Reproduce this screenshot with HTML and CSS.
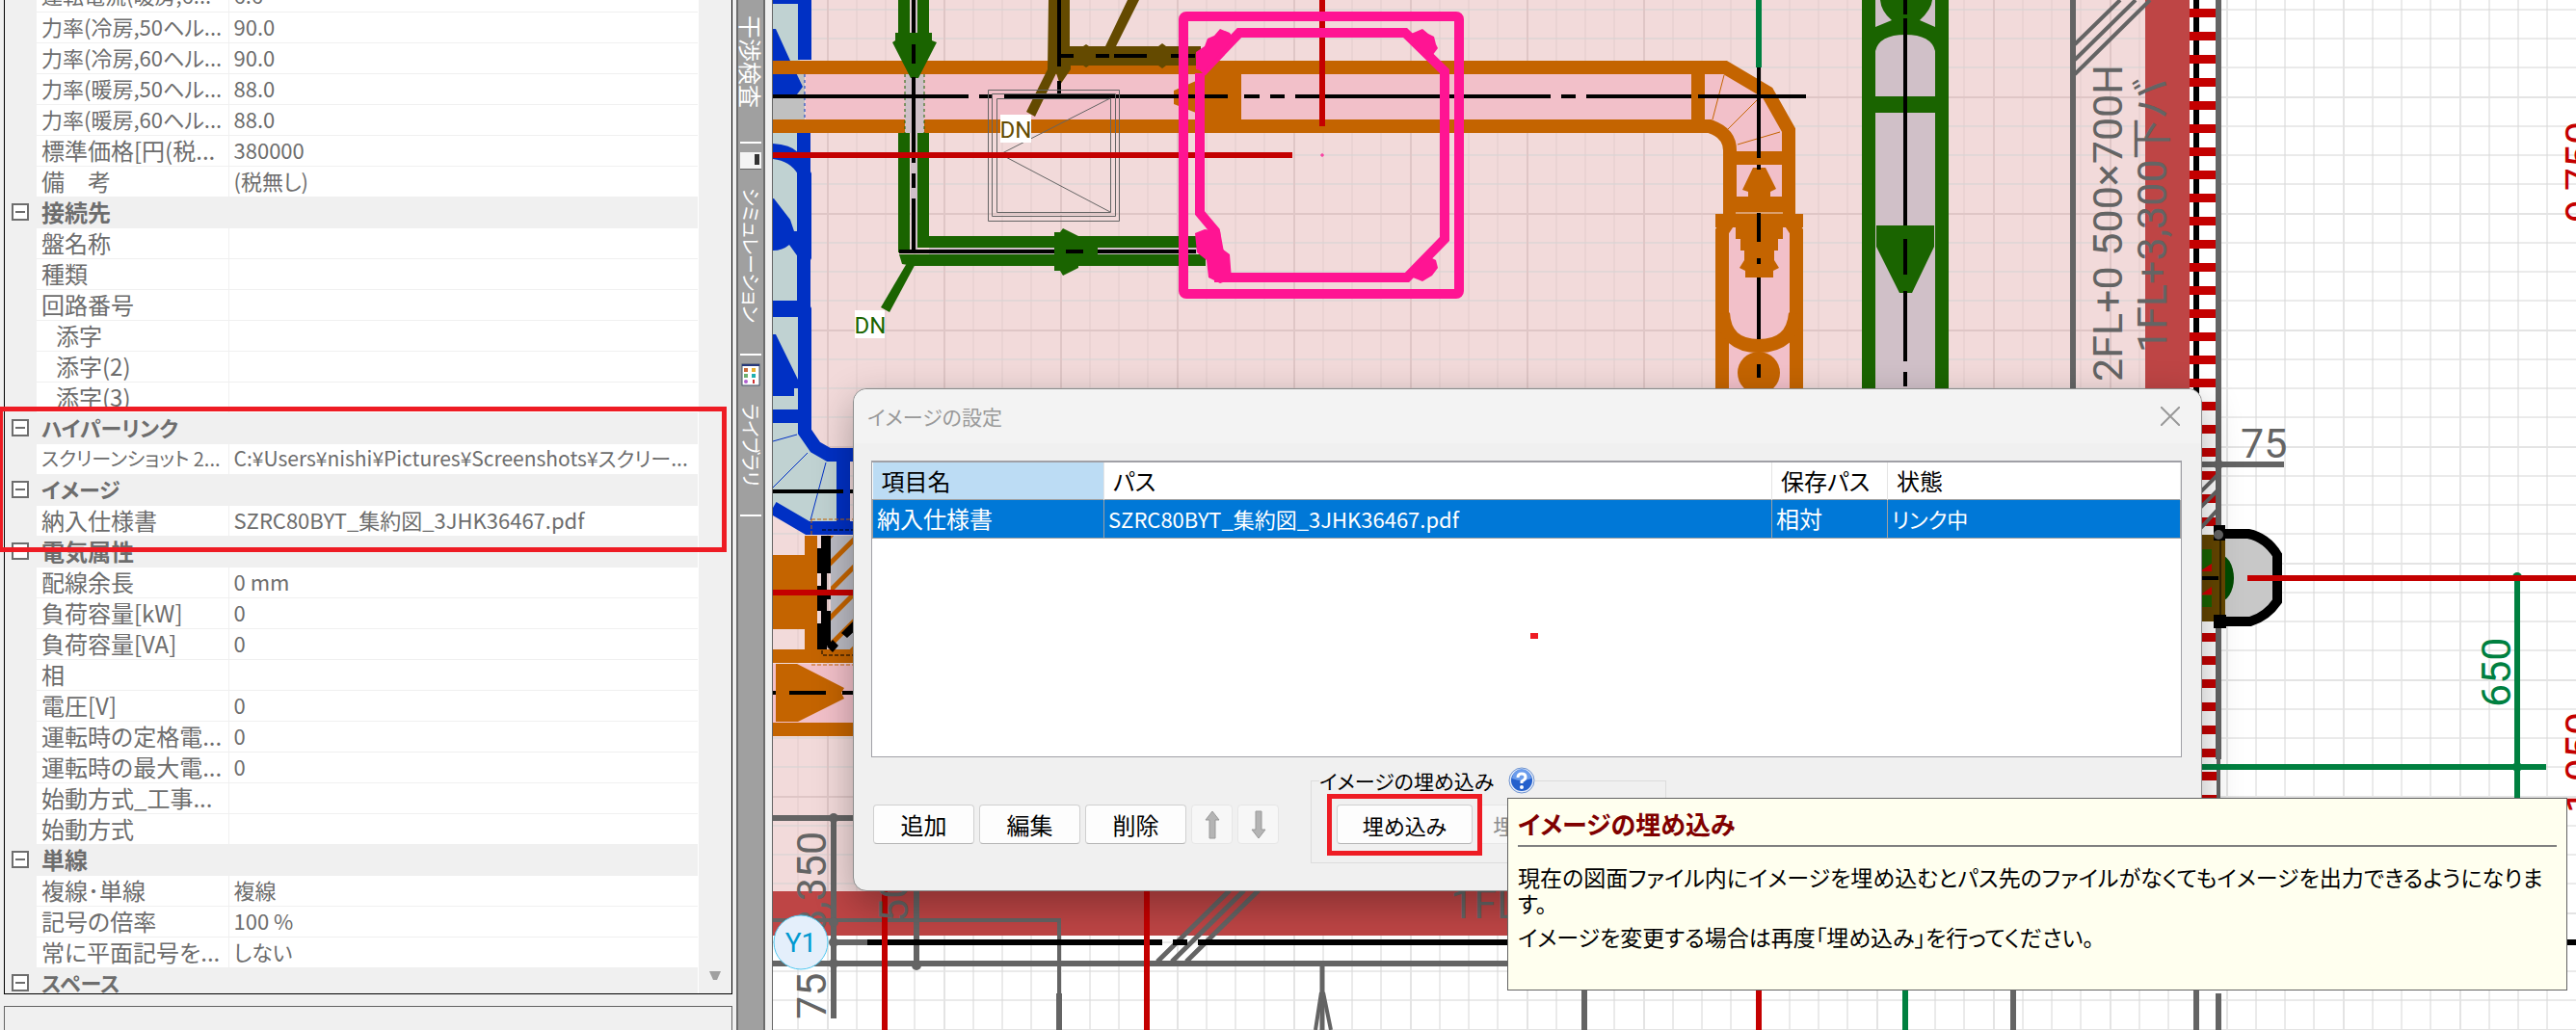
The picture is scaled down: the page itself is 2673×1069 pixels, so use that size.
FILE: index.html
```html
<!DOCTYPE html>
<html lang="ja">
<head>
  <meta charset="UTF-8" />
  <title>イメージの設定</title>
  <link rel="stylesheet" href="styles.css">
</head>
<body>

  <aside id="property-panel">
    <div class="tree-box">
      <div class="tree-scroll">
        <table class="props">
          <colgroup><col class="col-toggle"><col class="col-name"><col></colgroup>
          <tbody>
            <tr><td></td><th class="mixed">運転電流(暖房,6...</th><td>6.6</td></tr>
            <tr><td></td><th class="mixed">力率(冷房,50ヘル...</th><td>90.0</td></tr>
            <tr><td></td><th class="mixed">力率(冷房,60ヘル...</th><td>90.0</td></tr>
            <tr><td></td><th class="mixed">力率(暖房,50ヘル...</th><td>88.0</td></tr>
            <tr><td></td><th class="mixed">力率(暖房,60ヘル...</th><td>88.0</td></tr>
            <tr><td></td><th>標準価格[円(税...</th><td>380000</td></tr>
            <tr><td></td><th>備　考</th><td>(税無し)</td></tr>
            <tr class="group"><td><button class="toggle" aria-label="接続先"></button></td><th colspan="2">接続先</th></tr>
            <tr><td></td><th>盤名称</th><td></td></tr>
            <tr><td></td><th>種類</th><td></td></tr>
            <tr><td></td><th>回路番号</th><td></td></tr>
            <tr><td></td><th class="sub">添字</th><td></td></tr>
            <tr><td></td><th class="sub">添字(2)</th><td></td></tr>
            <tr><td></td><th class="sub">添字(3)</th><td></td></tr>
            <tr class="group"><td><button class="toggle" aria-label="ハイパーリンク"></button></td><th colspan="2" class="mixed">ハイパーリンク</th></tr>
            <tr><td></td><th class="kana">スクリーンショット 2...</th><td class="path">C:¥Users¥nishi¥Pictures¥Screenshots¥スクリー...</td></tr>
            <tr class="group"><td><button class="toggle" aria-label="イメージ"></button></td><th colspan="2" class="mixed">イメージ</th></tr>
            <tr><td></td><th>納入仕様書</th><td>SZRC80BYT_集約図_3JHK36467.pdf</td></tr>
            <tr class="group"><td><button class="toggle" aria-label="電気属性"></button></td><th colspan="2">電気属性</th></tr>
            <tr><td></td><th>配線余長</th><td>0 mm</td></tr>
            <tr><td></td><th>負荷容量[kW]</th><td>0</td></tr>
            <tr><td></td><th>負荷容量[VA]</th><td>0</td></tr>
            <tr><td></td><th>相</th><td></td></tr>
            <tr><td></td><th>電圧[V]</th><td>0</td></tr>
            <tr><td></td><th>運転時の定格電...</th><td>0</td></tr>
            <tr><td></td><th>運転時の最大電...</th><td>0</td></tr>
            <tr><td></td><th>始動方式_工事...</th><td></td></tr>
            <tr><td></td><th>始動方式</th><td></td></tr>
            <tr class="group"><td><button class="toggle" aria-label="単線"></button></td><th colspan="2">単線</th></tr>
            <tr><td></td><th>複線･単線</th><td>複線</td></tr>
            <tr><td></td><th>記号の倍率</th><td>100 %</td></tr>
            <tr><td></td><th>常に平面記号を...</th><td>しない</td></tr>
            <tr class="group"><td><button class="toggle" aria-label="スペース"></button></td><th colspan="2" class="mixed">スペース</th></tr>
          </tbody>
        </table>
      </div>
      <div class="scrollbar">
        <svg width="12" height="10" viewBox="0 0 12 10"><path d="M0 0H12L8 9H4Z" fill="#a0a0a0"/></svg>
      </div>
    </div>
    <div class="info-box"></div>
    <div class="mark mark-panel"></div>
  </aside>

  <nav id="side-tabs">
    <a href="#" class="tab">干渉検査</a>
    <span class="sep"></span>
    <svg class="tab-icon" width="24" height="20" viewBox="0 0 24 20">
      <rect x="1" y="1" width="22" height="17" fill="#f4f4f4"/><path d="M1 18.500H23" stroke="#666"/>
      <rect x="16" y="3" width="5" height="11" fill="#333"/>
    </svg>
    <a href="#" class="tab tab-sim">シミュレーション</a>
    <span class="sep"></span>
    <svg class="tab-icon" width="24" height="24" viewBox="0 0 24 24">
      <rect x="3" y="1" width="18" height="22" fill="#fff" stroke="#456" />
      <rect x="3" y="1" width="18" height="2" fill="#26387a"/>
      <rect x="5" y="5" width="4" height="4" fill="#c86a3a"/><rect x="13" y="5" width="4" height="4" fill="#e8b030"/>
      <rect x="5" y="11" width="4" height="4" fill="#6cb070"/><rect x="13" y="11" width="4" height="4" fill="#20b0b0"/>
      <circle cx="7" cy="19" r="2" fill="#b060d0"/><rect x="14" y="17" width="2" height="4" fill="#d03030"/>
    </svg>
    <a href="#" class="tab tab-lib">ライブラリ</a>
    <span class="sep"></span>
  </nav>

  <main id="canvas">
    <svg class="drawing" viewBox="802 0 1871 1069" preserveAspectRatio="xMinYMin slice">
      <defs>
        <pattern id="grid" width="121" height="121" x="11" y="100" patternUnits="userSpaceOnUse">
          <path d="M31 0V121M61 0V121M91 0V121M0 31H121M0 61H121M0 91H121" stroke="#d6d6d6"/>
          <path d="M1 0V121M0 1H121" stroke="#e4e4e4" stroke-width="2"/>
        </pattern>
        <pattern id="grid-pink" width="121" height="121" x="11" y="100" patternUnits="userSpaceOnUse">
          <path d="M31 0V121M61 0V121M91 0V121" stroke="#e2cccc"/>
          <path d="M0 31H121M0 61H121M0 91H121" stroke="#d3d3d3"/>
          <path d="M1 0V121M0 1H121" stroke="#dfc6c6" stroke-width="2"/>
        </pattern>
        <pattern id="hatch" width="20" height="20" patternUnits="userSpaceOnUse" patternTransform="rotate(45)">
          <rect width="20" height="20" fill="#bcbcc4"/><rect width="5" height="20" fill="#c46400"/>
        </pattern>
      </defs>

      <!-- floor and walls -->
      <rect x="802" width="1871" height="1069" fill="#fff"/>
      <rect x="802" width="1871" height="1069" fill="url(#grid)"/>
      <rect x="802" width="1424" height="925" fill="#f2dada"/>
      <rect x="802" width="1424" height="925" fill="url(#grid-pink)"/>
      <path d="M2226 0H2272V971H802V925H2226Z" fill="#be4545"/>
      <rect x="2272" width="27" height="925" fill="#fff"/>
      <path d="M2279 0V420" stroke="#000" stroke-width="6"/>
      <path d="M2287 9V850" stroke="#c40000" stroke-width="30" stroke-dasharray="9 15"/>
      <path d="M2302 0V788M2151 0V404" stroke="#646464" stroke-width="6"/>
      <path d="M2302 788V850" stroke="#646464" stroke-width="4"/>
      <path d="M2153 46L2200 0M2153 62L2216 0M2153 77L2231 0M2280 514L2302 492M2280 530L2302 508M2280 552L2302 528" stroke="#646464" stroke-width="4"/>

      <!-- blue duct -->
      <g fill="#c0d2d2">
        <rect x="802" width="28" height="63"/>
        <rect x="802" y="138" width="28" height="300"/>
        <path d="M802 438H834L846 464L858 476H874V547H838L802 527Z"/>
      </g>
      <rect x="802" y="77" width="33" height="47" fill="#c0c0c0"/>
      <g fill="#0030c4">
        <path d="M802 0H842V62H828V4H802Z"/>
        <path d="M802 30H805L820 63L833 90L827 98H802Z"/>
        <path d="M827 138H841V178L842 180V268L841 270V318L842 320V448H828V439H802V425H828V329H802V312H827Z"/>
        <path d="M802 149Q820 150 828 158V181Q820 167 802 165Z"/>
        <path d="M802 206H803L820 228L824 240H829V268L819 254Q812 260 802 260Z"/>
        <path d="M802 347H805L829 396V403H824V411H802Z"/>
      </g>
      <path d="M835 430V448L846 464L860 472H890M802 527L838 548H890M875 478V545" fill="none" stroke="#0030c4" stroke-width="14"/>
      <path d="M802 458L827 451M802 506L838 470M857 480L841 540" stroke="#0030c4"/>
      <path d="M802 510H875M882 510H890" stroke="#000" stroke-width="4"/>

      <!-- equipment on the left edge -->
      <rect x="862" y="556" width="28" height="118" fill="url(#hatch)"/>
      <path d="M802 576H835V556H848V674H890V688H802V674H835V653H802Z" fill="#c46400"/>
      <rect x="802" y="689" width="88" height="61" fill="#f2c0c9"/>
      <path d="M805 689H827L876 714L873 719L876 725L828 749H805ZM802 750H890V764H802Z" fill="#c46400"/>
      <path d="M802 719H805M819 719H857M874 719H890" stroke="#000" stroke-width="4"/>
      <path d="M848 569H852V556H862V595H858V612H862V622H858V634H862V670H858V674H848V647H852V634H848V608H852V595H848Z" fill="#000"/>
      <path d="M858 671L864 664L870 670L864 677ZM873 657L890 640V652L879 662Z" fill="#000"/>
      <path d="M842 539H890M842 539V556M842 690H890" stroke="#c46400" stroke-dasharray="4 2"/>
      <path d="M853 550H890M853 675V680H890" stroke="#000" fill="none" stroke-dasharray="4 2"/>

      <!-- orange pipe -->
      <path d="M836 77H1762V124H836Z" fill="#f2c0c9"/>
      <path d="M1762 70H1790L1834 96L1855 137V236H1864V404H1787V236H1795V150L1780 131H1762Z" fill="#f2c0c9"/>
      <path d="M835 77V124" stroke="#0030c4" stroke-dasharray="3 3"/>
      <path d="M802 63H1755V77H802ZM802 124H1755V138H802ZM1250 70H1288V130H1250Z" fill="#c46400"/>
      <path d="M1218 94L1241 84H1252V117H1241L1218 108Z" fill="#c46400"/>
      <g fill="none" stroke="#c46400" stroke-width="14">
        <path d="M1750 70H1790L1834 96L1856 135V228L1864 240V404"/>
        <path d="M1750 131H1774Q1795 138 1795 156V228L1787 240V404"/>
        <path d="M1762 64V136M1795 164H1856"/>
        <path d="M1788 325Q1790 359 1825 359Q1860 359 1863 325"/>
      </g>
      <g fill="#c46400">
        <path d="M1788 204H1863V222H1871V236H1780V222H1788Z"/>
        <path d="M1819 174H1832L1843 196L1837 199V204H1814V199L1808 197Z"/>
        <path d="M1801 236H1850V248H1845V260H1841V270L1846 278L1840 281V288H1811V281L1805 278L1810 270V260H1806V248H1801Z"/>
        <circle cx="1825" cy="387" r="22"/>
      </g>
      <path d="M1801 221H1850" stroke="#f2dada"/>
      <path d="M1789 78L1777 124M1825 102L1793 134M1803 150L1847 137" stroke="#c46400"/>

      <!-- green pipes -->
      <path d="M945 0H952V262H945ZM939 77H959V138H939ZM964 257H1242V264H964ZM1946 0H2008V404H1946Z" fill="#d0c0c8"/>
      <g fill="#1a6400">
        <path d="M932 0H944V40H932ZM952 0H964V40H952ZM932 138H944V262H932ZM952 138H964V245H1251V257H952ZM933 264H1251V276H948L936 274Z"/>
        <path d="M929 34H967V42L972 44L953 81H945L926 44L929 42Z"/>
        <path d="M1094 241H1100L1103 237L1119 245V257H1139V265H1119V278L1103 286L1100 281H1094Z"/>
        <path d="M944 268L952 270L923 324L914 319Z"/>
        <path d="M1932 0H1946V404H1932ZM2008 0H2022V404H2008ZM1946 100H2008V117H1946Z"/>
        <path d="M1946 53Q1950 36 1977 36Q2004 36 2008 53V28L1992 21Q2004 10 2005 0H1951Q1952 12 1963 21L1946 28Z"/>
        <path d="M1947 234H2007V256L1984 304H1971L1947 256Z"/>
      </g>
      <path d="M939 77V138M959 77V138" stroke="#1a6400" stroke-dasharray="3 3"/>
      <path d="M948 0V34M948 46V66M948 80V169M948 180V195M948 206V261M933 261H1094M1106 261H1124M1139 261H1241M1977 0V15M1977 19V234M1977 248V285M1977 302V375M1977 386V401" stroke="#000" stroke-width="4"/>

      <!-- brown drain -->
      <path d="M1088 0H1110V48H1124L1127 46L1130 48H1147L1170 0H1182L1158 48H1202L1206 45L1210 48H1246V68H1210L1206 71L1202 68H1130L1127 70L1124 68H1111V72L1100 88L1096 76L1074 121L1065 116L1087 72Z" fill="#644a00"/>
      <path d="M1099 0V69M1099 84V100M1101 58H1114M1137 58H1151M1156 58H1190M1215 58H1240" stroke="#000" stroke-width="4"/>
      <path d="M802 100H1005M1016 100H1030M1042 100H1274M1291 100H1307M1318 100H1333M1344 100H1609M1620 100H1635M1646 100H1755M1762 100H1874M1825 70V164M1825 171V176M1825 221V251M1825 268V274M1825 288V352M1825 378V392" stroke="#000" stroke-width="4"/>

      <!-- ceiling unit -->
      <path d="M1025.500 93.500H1161.500V229.500H1025.500ZM1029.500 97.500H1157.500V224.500H1029.500ZM1034.500 102.500H1152.500V220.500H1034.500ZM1152 102L1038 160L1152 220" fill="none" stroke="#646464"/>
      <path d="M802 161H1341M802 615H890M1372 0V131" stroke="#c40000" stroke-width="6"/>
      <path d="M1825 0V70" stroke="#008040" stroke-width="6"/>
      <path d="M1370 161H1374M1372 159V163" stroke="#ff1493"/>
      <g fill="none" stroke="#ff1493" stroke-width="10">
        <rect x="1228" y="17" width="286" height="288" rx="3"/>
        <path d="M1247 75L1286 34H1458L1499 74V248L1460 288H1265V262L1261 240L1245 221V76"/>
      </g>
      <g fill="#ff1493">
        <path d="M1241 72V54L1250 48L1253 40L1260 37L1266 30L1276 34L1280 40L1250 74Z"/>
        <path d="M1462 36L1476 30L1482 35L1488 38L1490 46L1492 50L1486 58L1478 56Z"/>
        <path d="M1462 282L1482 266L1490 270L1492 278L1486 286L1476 292L1466 288Z"/>
        <path d="M1240 242L1250 238L1266 240L1268 258L1276 264L1278 290L1266 294L1254 288L1252 270L1242 262Z"/>
      </g>
      <g fill="#fff"><rect x="1038" y="119" width="32" height="29"/><rect x="887" y="322" width="31" height="29"/></g>
      <text class="cad dn brown" x="1054" y="143" text-anchor="middle">DN</text>
      <text class="cad dn green" x="903" y="346" text-anchor="middle">DN</text>

      <!-- column fitting on the right wall -->
      <path d="M2302 554H2333Q2352 558 2363 576V624Q2352 640 2335 645H2302Z" fill="#c8c8c8"/>
      <ellipse cx="2302" cy="600" rx="16" ry="25" fill="#004b00"/>
      <rect x="2284" y="555" width="25" height="90" fill="#644600"/>
      <path d="M2284 570H2295V585L2284 592ZM2284 618H2295V630H2284Z" fill="#1a6400"/>
      <path d="M2284 592L2295 585V593H2284ZM2284 617L2295 609V617Z" fill="#d00000"/>
      <path d="M2302 554H2333Q2352 558 2363 576V624Q2352 640 2335 645H2302" fill="none" stroke="#000" stroke-width="10"/>
      <path d="M2297 545H2309V561H2297ZM2297 638H2310V652H2297Z"/>
      <path d="M2284 600H2302" stroke="#000" stroke-width="4"/>
      <path d="M2304 561V638" stroke="#000"/>
      <circle cx="2302" cy="555" r="5" fill="#646464"/>

      <!-- dimension lines -->
      <g stroke="#646464" stroke-width="6">
        <path d="M802 849H890M865 849V1057M951 900V1003M864 978H900M802 1000H2300M2280 482H2370"/>
        <path d="M1099 1031V1069M1644 1000V1069M2089 1000V1069M2279 1000V1069M2302 1031V1069"/>
        <path d="M802 955H1099V1040" fill="none" stroke-width="4"/>
        <path d="M1201 998L1276 924M1216 998L1291 924M1231 998L1306 924" stroke-width="5"/>
        <path d="M1372 1002V1069" stroke-width="5"/>
        <path d="M1371 1030L1365 1069M1373 1030L1381 1069" stroke-width="4"/>
      </g>
      <g fill="#646464"><circle cx="865" cy="849" r="5"/><circle cx="865" cy="957" r="5"/><circle cx="865" cy="978" r="5"/><circle cx="865" cy="1000" r="5"/><circle cx="951" cy="1002" r="5"/><circle cx="2302" cy="482" r="5"/></g>
      <path d="M900 978H1206M1217 978H1232M1243 978H2673" stroke="#000" stroke-width="6"/>
      <path d="M918 920V1069M1190 920V1069M1825 1020V1069" stroke="#c40000" stroke-width="6"/>
      <path d="M1977 1020V1069M2612 596V830M2280 796H2642" stroke="#008040" stroke-width="6"/>
      <g fill="#008040"><circle cx="2612" cy="599" r="5"/><circle cx="2612" cy="796" r="5"/></g>
      <path d="M2332 600H2673" stroke="#c40000" stroke-width="6"/>

      <text class="cad" transform="translate(857 968) rotate(-90)">8,350</text>
      <text class="cad" transform="translate(857 1058) rotate(-90)">75</text>
      <text class="cad" transform="translate(942 957) rotate(-90)">50</text>
      <text class="cad" x="1505" y="953">1FL</text>
      <text class="cad" transform="translate(2202 396) rotate(-90)">2FL+0 500×700H</text>
      <text class="cad" transform="translate(2248 366) rotate(-90)">1FL+3,300下バ</text>
      <text class="cad" x="2325" y="475">75</text>
      <text class="cad teal" transform="translate(2605 734) rotate(-90)">650</text>
      <text class="cad red" transform="translate(2692 231) rotate(-90)">9,750</text>
      <text class="cad red" transform="translate(2692 844) rotate(-90)">1,050</text>

      <circle cx="831" cy="978" r="28" fill="#e4effb" stroke="#4fc8f0"/>
      <text class="cad axis" x="831" y="988" text-anchor="middle">Y1</text>
    </svg>

    <section class="dialog">
      <header class="title-bar">
        <span>イメージの設定</span>
        <button class="close" aria-label="閉じる">
          <svg width="20" height="20" viewBox="0 0 20 20"><path d="M0 0L20 20M20 0L0 20" stroke="#999" stroke-width="2"/></svg>
        </button>
      </header>
      <div class="list-box">
        <table class="list">
          <colgroup><col class="c-name"><col><col class="c-save"><col class="c-state"></colgroup>
          <thead>
            <tr><th class="sorted">項目名</th><th>パス</th><th>保存パス</th><th>状態</th></tr>
          </thead>
          <tbody>
            <tr><td>納入仕様書</td><td class="mixed">SZRC80BYT_集約図_3JHK36467.pdf</td><td>相対</td><td class="mixed">リンク中</td></tr>
          </tbody>
        </table>
        <span class="red-dot"></span>
      </div>
      <footer class="actions">
        <button>追加</button>
        <button>編集</button>
        <button>削除</button>
        <button class="arrow" disabled aria-label="上へ">
          <svg width="16" height="30" viewBox="0 0 16 30"><path d="M8 1L15 10H11V29H5V10H1Z" fill="#b4b4b4" stroke="#999"/></svg>
        </button>
        <button class="arrow" disabled aria-label="下へ">
          <svg width="16" height="30" viewBox="0 0 16 30"><path d="M8 29L15 20H11V1H5V20H1Z" fill="#b4b4b4" stroke="#999"/></svg>
        </button>
        <fieldset>
          <legend>イメージの埋め込み
            <svg width="28" height="28" viewBox="0 0 28 28">
              <circle cx="14" cy="14" r="13" fill="#e6eefa" stroke="#6f93cf"/>
              <circle cx="14" cy="14" r="11" fill="#2460cc"/>
              <path d="M4 12A10 10 0 0 1 24 12Q14 16 4 12Z" fill="#6b9cec"/>
              <path d="M10 11Q10 7 14 7Q18 7 18 10.500Q18 13 14 15V17" fill="none" stroke="#fff" stroke-width="3"/>
              <circle cx="14" cy="21" r="2" fill="#fff"/>
            </svg>
          </legend>
          <button class="embed">埋め込み</button>
          <button class="embed release" disabled>埋め込み解除</button>
          <div class="mark mark-embed"></div>
        </fieldset>
      </footer>
    </section>

    <div class="tooltip" role="tooltip">
      <h2>イメージの埋め込み</h2>
      <p>現在の図面ファイル内にイメージを埋め込むとパス先のファイルがなくてもイメージを出力できるようになりま<br>す。</p>
      <p>イメージを変更する場合は再度「埋め込み」を行ってください。</p>
    </div>
  </main>

</body>
</html>
```
FILE: styles.css
```css
* {
  box-sizing: border-box;
}

body {
  margin: 0;
  display: flex;
  height: 100vh;
  overflow: hidden;
  background-color: #f0f0f0;
  font-family: "Noto Sans CJK JP", sans-serif;
  font-size: 24px;
  font-feature-settings: "palt";
}

button {
  font: inherit;
  font-feature-settings: inherit;
}

/* property panel */

#property-panel {
  position: relative;
  flex: 0 0 764px;
  min-width: 0;
  display: flex;
  flex-direction: column;
  gap: 12px;
  padding: 0 4px;
}

.tree-box {
  flex: 1;
  min-height: 0;
  display: flex;
  overflow: hidden;
  border: 1px solid #000;
  border-top: none;
}

.tree-scroll {
  flex: 1;
  min-width: 0;
  overflow: hidden;
}

.info-box {
  flex: 0 0 25px;
  border: 1px solid #646464;
  border-bottom: none;
}

.props {
  width: 100%;
  margin-top: -20px;
  table-layout: fixed;
  border-collapse: collapse;
  color: #6d6d6d;
}

.col-toggle {
  width: 33px;
}

.col-name {
  width: 199px;
}

.props th,
.props td {
  height: 32px;
  padding: 0 0 2px 5px;
  line-height: 29px;
  font-weight: normal;
  text-align: left;
  white-space: nowrap;
  background-color: #fff;
  border-bottom: 1px solid #f0f0f0;
}

.props th + td {
  border-left: 1px solid #f0f0f0;
  font-size: 22px;
}

.props td:first-child {
  padding: 0 0 0 7px;
  background-color: #f0f0f0;
}

.props .mixed {
  font-size: 22px;
}

.props .kana {
  font-size: 20px;
}

.props th + .path {
  font-size: 21px;
}

.props .group th {
  background-color: #f0f0f0;
  font-weight: bold;
}

.props .sub {
  padding-left: 20px;
}

.toggle {
  display: block;
  width: 18px;
  height: 18px;
  padding: 0 2px;
  border: 2px solid #6d6d6d;
  background-color: #fff;
}

.toggle::before {
  content: "";
  display: block;
  height: 2px;
  background-color: #6d6d6d;
}

.scrollbar {
  flex: 0 0 35px;
  display: flex;
  align-items: flex-end;
  justify-content: center;
  padding-bottom: 13px;
  border-left: 1px solid #fff;
}

.mark {
  position: absolute;
  border: 5px solid #ee1c24;
  pointer-events: none;
}

.mark-panel {
  left: -2px;
  top: 422px;
  width: 756px;
  height: 151px;
}

/* vertical tabs */

#side-tabs {
  flex: 0 0 30px;
  display: flex;
  flex-direction: column;
  align-items: center;
  padding-top: 16px;
  border: solid #6d6d6d;
  border-width: 0 2px;
  background-color: #a0a0a0;
}

.tab {
  writing-mode: vertical-rl;
  text-orientation: sideways;
  height: 131px;
  line-height: 26px;
  color: #fff;
  text-decoration: none;
  white-space: nowrap;
}

.sep {
  width: 22px;
  height: 2px;
  background-color: #fff;
}

.tab-icon {
  margin: 8px 0 18px;
}

.tab-sim,
.tab-lib {
  font-size: 20px;
}

.tab-sim {
  height: 172px;
}

.tab-lib {
  height: 115px;
}

/* drawing area */

#canvas {
  position: relative;
  flex: 1;
  margin-left: 7px;
  border-left: 1px solid #646464;
  overflow: hidden;
}

.drawing {
  display: block;
  width: 100%;
  height: 100%;
}

.cad {
  font-family: Roboto, "Noto Sans CJK JP", sans-serif;
  font-size: 43px;
  font-weight: 400;
  fill: #646464;
}

.cad.dn {
  font-size: 24px;
}

.cad.axis {
  font-size: 28px;
  fill: #0099d0;
}

.cad.brown { fill: #644a00; }
.cad.green { fill: #1a6400; }
.cad.teal { fill: #008040; }
.cad.red { fill: #c40000; }

/* dialog */

.dialog {
  position: absolute;
  left: 83px;
  top: 403px;
  width: 1400px;
  height: 522px;
  display: flex;
  flex-direction: column;
  border: 1px solid #8c8c8c;
  border-radius: 14px;
  background-color: #f0f0f0;
  box-shadow: 0 14px 40px rgba(0, 0, 0, 0.3);
}

.title-bar {
  display: flex;
  align-items: center;
  justify-content: space-between;
  height: 56px;
  padding: 0 22px 0 14px;
  border-radius: 14px 14px 0 0;
  background-color: #f3f3f3;
  color: #999;
  font-size: 21px;
}

.close {
  display: flex;
  padding: 0;
  border: none;
  background: none;
}

.list-box {
  position: relative;
  height: 308px;
  margin: 18px 20px 0 18px;
  border: 1px solid #a0a0a6;
  border-top-width: 2px;
  background-color: #fff;
}

.list {
  width: 100%;
  table-layout: fixed;
  border-collapse: collapse;
}

.c-name { width: 240px; }
.c-save { width: 120px; }
.c-state { width: 304px; }

.list th {
  height: 38px;
  padding: 0 9px;
  line-height: 36px;
  font-weight: normal;
  text-align: left;
  border-right: 1px solid #e4e4e4;
}

.list .sorted {
  background-color: #bcdcf4;
}

.list td {
  height: 40px;
  padding: 0 4px;
  line-height: 38px;
  color: #fff;
  background-color: #0078d7;
  border: 1px solid #a0a0a0;
}

.list .mixed {
  font-size: 22px;
}

.red-dot {
  position: absolute;
  left: 683px;
  top: 177px;
  width: 8px;
  height: 6px;
  background-color: #ee1c24;
}

.actions {
  display: flex;
  align-items: flex-start;
  gap: 5px;
  padding: 10px 20px 0;
}

.actions button {
  width: 105px;
  height: 41px;
  margin-top: 39px;
  padding: 0;
  line-height: 36px;
  border: 1px solid #d0d0d0;
  border-bottom-color: #b4b4b4;
  border-radius: 4px;
  background-color: #fdfdfd;
  color: #000;
  white-space: nowrap;
}

.actions button:disabled {
  border-color: #e6e6e6;
  background-color: #f7f7f7;
  color: #8c8c8c;
}

.actions .arrow {
  display: flex;
  align-items: center;
  justify-content: center;
  width: 43px;
}

fieldset {
  position: relative;
  width: 369px;
  height: 100px;
  margin: 0 0 0 28px;
  padding: 0 26px;
  border: 1px solid #dcdcdc;
  white-space: nowrap;
}

legend {
  display: flex;
  align-items: center;
  gap: 15px;
  margin-left: -18px;
  padding: 0;
  font-size: 21px;
  line-height: 28px;
}

.actions .embed {
  width: 141px;
  margin-top: 11px;
  font-size: 22px;
}

.actions .release {
  width: 163px;
}

.mark-embed {
  left: 16px;
  top: 0;
  width: 161px;
  height: 64px;
}

/* help tooltip */

.tooltip {
  position: absolute;
  left: 762px;
  top: 828px;
  width: 1100px;
  height: 200px;
  padding: 6px 10px;
  border: 1px solid #646464;
  background-color: #ffffef;
  color: #000;
  font-size: 23px;
  white-space: nowrap;
}

.tooltip h2 {
  margin: 0 0 18px;
  padding-bottom: 2px;
  font-size: 26px;
  line-height: 40px;
  color: #800000;
  border-bottom: 2px solid #808080;
}

.tooltip p {
  margin: 0 0 8px;
  line-height: 27px;
}
```
